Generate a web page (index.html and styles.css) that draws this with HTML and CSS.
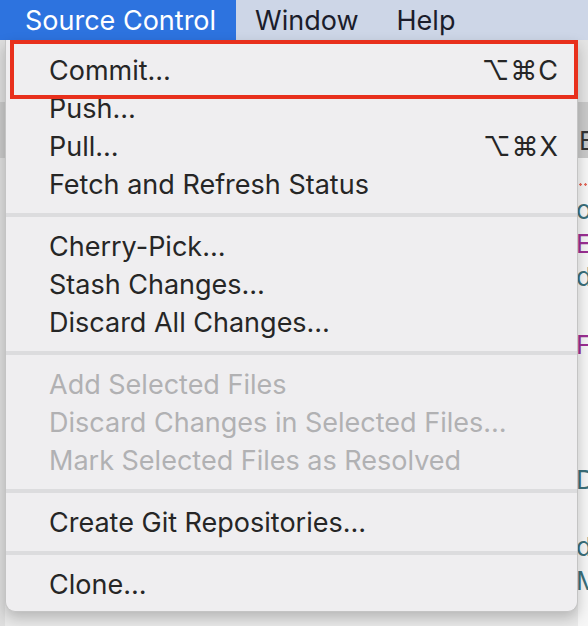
FILE: index.html
```html
<!DOCTYPE html>
<html lang="en">
<head>
    <meta charset="UTF-8">
    <meta name="viewport" content="width=device-width, initial-scale=1.0">
    <title>Source Control</title>
    <link rel="stylesheet" href="styles.css">
</head>
<body>

<!-- menu bar -->
<div class="menubar">
    <div class="bar-item active">Source Control</div>
    <div class="bar-item">Window</div>
    <div class="bar-item">Help</div>
</div>

<div class="workspace">
    <div class="gutter">
        <div class="gutter-band"></div>
    </div>

    <!-- dropdown -->
    <div class="menu">
        <div class="highlight"></div>
        <div class="row"><span>Commit…</span><span class="keys">⌥⌘C</span></div>
        <div class="row"><span>Push…</span></div>
        <div class="row"><span>Pull…</span><span class="keys">⌥⌘X</span></div>
        <div class="row"><span>Fetch and Refresh Status</span></div>
        <div class="sep"></div>
        <div class="row"><span>Cherry-Pick…</span></div>
        <div class="row"><span>Stash Changes…</span></div>
        <div class="row"><span>Discard All Changes…</span></div>
        <div class="sep"></div>
        <div class="row disabled"><span>Add Selected Files</span></div>
        <div class="row disabled"><span>Discard Changes in Selected Files…</span></div>
        <div class="row disabled"><span>Mark Selected Files as Resolved</span></div>
        <div class="sep"></div>
        <div class="row"><span>Create Git Repositories…</span></div>
        <div class="sep"></div>
        <div class="row"><span>Clone…</span></div>
    </div>

    <!-- code editor peeking out on the right -->
    <div class="editor">
        <div class="ed-top"></div>
        <div class="ed-band">B</div>
        <div class="ed-dots"></div>
        <div class="line teal">o</div>
        <div class="line purple">E</div>
        <div class="line teal">d</div>
        <div class="line"></div>
        <div class="line purple">F</div>
        <div class="line"></div>
        <div class="line"></div>
        <div class="line"></div>
        <div class="line teal dotted">D</div>
        <div class="line"></div>
        <div class="line teal">d</div>
        <div class="line teal">M</div>
    </div>
</div>

</body>
</html>
```

FILE: styles.css
```css
body {
    margin: 0;
    width: 588px;
    height: 626px;
    overflow: hidden;
    background: #e9e9e9;
    font-family: Inter, "Liberation Sans", sans-serif;
    font-size: 27px;
    color: #262626;
}

/* menu bar */
.menubar {
    display: flex;
    height: 40px;
    background: #cdd6e7;
    color: #1b1d2b;
}
.bar-item {
    padding: 2px 19px 0;
    line-height: 38px;
}
.bar-item.active {
    padding-left: 25px;
    padding-right: 20px;
    background: #2d73df;
    color: #fff;
}

.workspace {
    display: flex;
    height: 586px;
}

.gutter {
    width: 5px;
    background: #dedede;
}
.gutter-band {
    margin-top: 62px;
    height: 56px;
    background: #c9c9c9;
}

/* dropdown */
.menu {
    position: relative;
    z-index: 2;
    width: 571px;
    height: 552px;
    padding: 11px 0 8px;
    background: #efeef0;
    border: 1px solid #c4c4c4;
    border-top: none;
    border-radius: 0 0 10px 10px;
    box-shadow: 0 6px 14px rgba(0, 0, 0, 0.22);
}
.row {
    display: flex;
    justify-content: space-between;
    align-items: center;
    height: 38px;
    padding: 0 18px 0 43px;
    white-space: nowrap;
}
.keys {
    letter-spacing: 1px;
}
.row.disabled {
    color: #b1b1b3;
}
.sep {
    height: 4px;
    margin: 10px 0;
    background: #dcdcde;
}

/* red annotation box */
.highlight {
    position: absolute;
    left: 4px;
    top: 0;
    width: 560px;
    height: 51px;
    border: 4px solid #e8301c;
}

.editor {
    flex: 1;
    overflow: hidden;
    background: #f6f6f6;
    font-size: 26px;
    white-space: nowrap;
}
.ed-top {
    height: 62px;
    background: #e4e4e4;
}
.ed-band {
    height: 56px;
    padding-left: 1px;
    line-height: 78px;
    background: #c9c9c9;
    color: #333;
}
.ed-dots {
    height: 35px;
    background: radial-gradient(circle, #e46a5c 1px, transparent 1.5px) 0 24px / 5px 5px repeat-x;
}
.line {
    height: 33.7px;
    line-height: 33.7px;
    margin-left: -2px;
}
.teal {
    color: #3b6f7a;
}
.purple {
    color: #9b2f93;
}
.dotted {
    background: radial-gradient(circle, #e46a5c 1px, transparent 1.5px) 2px 32px / 5px 5px repeat-x;
}
```
